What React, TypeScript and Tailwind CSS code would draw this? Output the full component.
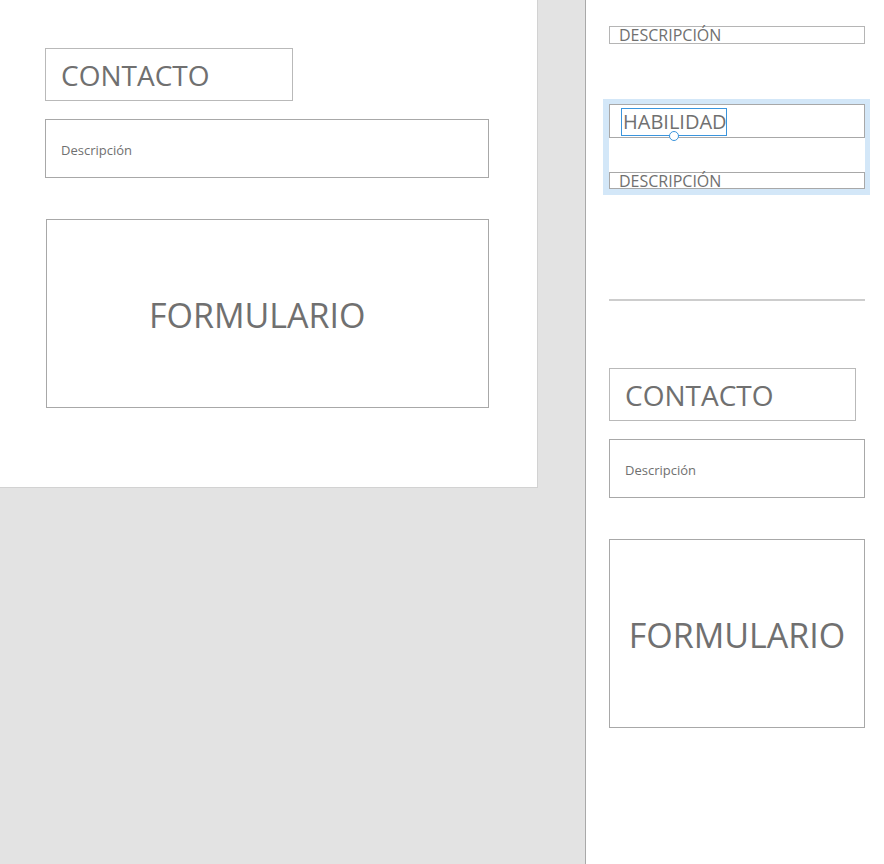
import React from "react";

const font = { fontFamily: '"Open Sans", "Noto Sans", sans-serif' };

export default function App() {
  return (
    <div className="w-[884px] h-[864px] flex overflow-hidden text-[#707070]" style={font}>
      {/* canvas */}
      <div className="w-[585px] h-full bg-[#e3e3e3] shrink-0">
        <div className="w-[538px] h-[488px] bg-white border-r border-b border-[#d2d2d2] pl-[45px] pt-[48px]">
          <div className="w-[248px] h-[53px] border border-[#b9b9b9] flex items-center pl-[15px] pt-[1px]">
            <span className="text-[28px] leading-none">CONTACTO</span>
          </div>
          <div className="mt-[18px] w-[444px] h-[59px] border border-[#a8a8a8] flex items-center pl-[15px] pt-[3px]">
            <span className="text-[13px] leading-none">Descripción</span>
          </div>
          <div className="mt-[41px] ml-[1px] w-[443px] h-[189px] border border-[#a8a8a8] flex items-center pl-[102px] pt-[2px]">
            <span className="text-[34px] leading-none">FORMULARIO</span>
          </div>
        </div>
      </div>
      {/* side panel */}
      <div className="flex-1 h-full bg-white border-l border-[#a9a9a9] pl-[23px] pt-[26px]">
        <div className="w-[256px] h-[18px] border border-[#b5b5b5] flex items-center pl-[9px]">
          <span className="text-[16px] leading-none">DESCRIPCIÓN</span>
        </div>
        <div className="mt-[55px] -ml-[6px] w-[267px] h-[96px] border-l-[6px] border-r-[5px] border-t-[5px] border-b-[6px] border-[#d3e7f8]">
          <div className="relative w-[256px] h-[34px] border border-[#a8a8a8] pl-[11px] pt-[3px]">
            <div className="w-[106px] h-[28px] border border-[#3a94dc] flex items-center pl-[1px]">
              <span className="text-[20px] leading-none">HABILIDAD</span>
            </div>
            <div className="absolute left-[59px] top-[26px] w-[10px] h-[10px] rounded-full border border-[#3a94dc] bg-white" />
          </div>
          <div className="mt-[34px] w-[256px] h-[17px] border border-[#a8a8a8] flex items-center pl-[9px]">
            <span className="text-[16px] leading-none">DESCRIPCIÓN</span>
          </div>
        </div>
        <div className="mt-[104px] w-[256px] h-[2px] bg-[#cdcdcd]" />
        <div className="mt-[67px] w-[247px] h-[53px] border border-[#b9b9b9] flex items-center pl-[15px] pt-[1px]">
          <span className="text-[28px] leading-none">CONTACTO</span>
        </div>
        <div className="mt-[18px] w-[256px] h-[59px] border border-[#a8a8a8] flex items-center pl-[15px] pt-[3px]">
          <span className="text-[13px] leading-none">Descripción</span>
        </div>
        <div className="mt-[41px] w-[256px] h-[189px] border border-[#a8a8a8] flex items-center justify-center pt-[2px]">
          <span className="text-[34px] leading-none">FORMULARIO</span>
        </div>
      </div>
    </div>
  );
}
